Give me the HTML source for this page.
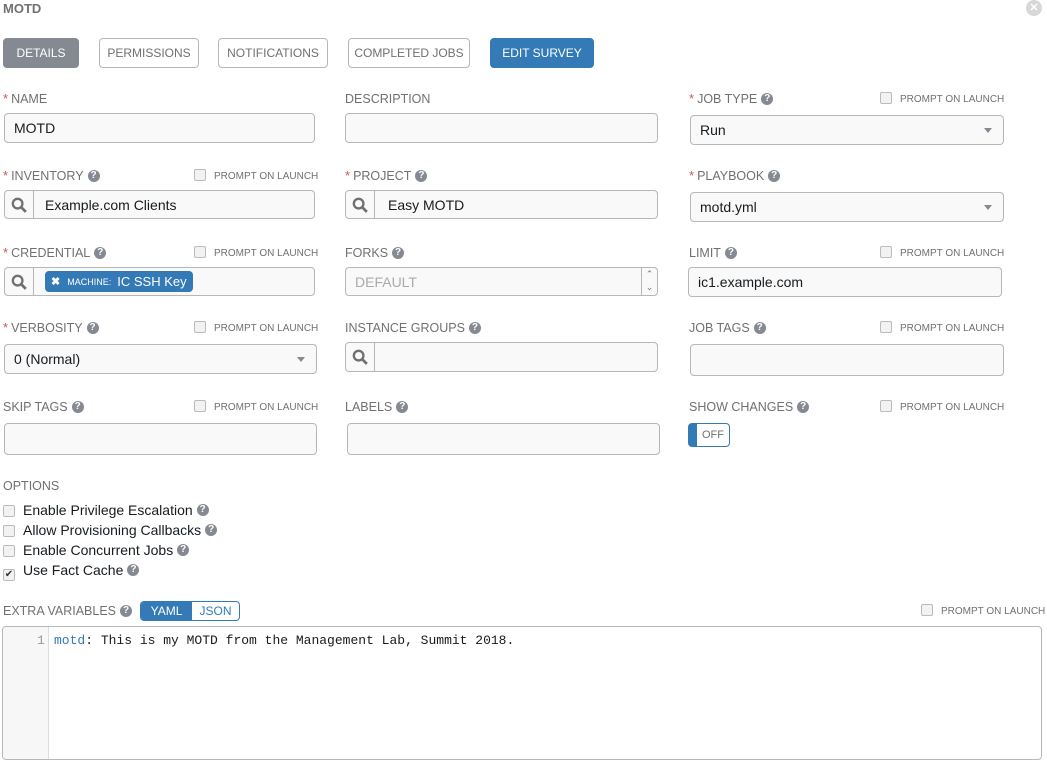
<!DOCTYPE html>
<html><head><meta charset="utf-8"><style>
*{box-sizing:border-box;margin:0;padding:0}
body{width:1047px;height:766px;background:#fff;font-family:"Liberation Sans",sans-serif;position:relative;overflow:hidden;color:#707070}
.a{position:absolute}
.lbl{position:absolute;font-size:12.5px;color:#707070;white-space:nowrap;line-height:14px}
.lbl .s{color:#d9534f;font-size:13px;margin-right:3px}
.q{display:inline-block;width:12px;height:12px;border-radius:50%;background:#848992;color:#fff;font-size:10px;font-weight:bold;text-align:center;line-height:12px;vertical-align:top;margin-top:1px;margin-left:4px}
.inp{position:absolute;border:1px solid #b7b7b7;border-radius:4px;background:#f9f9f9;font-size:14px;color:#161b1f;padding-left:9px;display:flex;align-items:center}
.sel::after{content:"";position:absolute;right:11px;top:50%;margin-top:-2px;border-left:4px solid transparent;border-right:4px solid transparent;border-top:5px solid #848992}
.pl{position:absolute;font-size:10px;color:#707070;white-space:nowrap;line-height:12px}
.cb{display:inline-block;width:12px;height:12px;border:1px solid #bbb;border-radius:2px;background:#f2f2f2;vertical-align:-2px;margin-right:8px}
.tab{position:absolute;top:38px;height:30px;border:1px solid #b7b7b7;border-radius:4px;font-size:12px;color:#707070;display:flex;align-items:center;justify-content:center;background:#fff}
.srch{position:absolute;left:0;top:0;bottom:0;width:29px;border-right:1px solid #b7b7b7;display:flex;align-items:center;justify-content:center}
.opt{position:absolute;left:3px;font-size:14px;color:#161b1f;white-space:nowrap;line-height:16px}
.opt .q{margin-top:2px}
</style></head><body>
<div class="a" style="left:3px;top:1px;font-size:13px;font-weight:bold;color:#707070">MOTD</div>
<div class="a" style="left:1026px;top:0;width:16px;height:16px;border-radius:50%;background:#d7d7d7;color:#fff;font-size:11px;font-weight:bold;text-align:center;line-height:16px">✕</div>

<div class="tab" style="left:3px;width:76px;background:#848992;border-color:#848992;color:#fff">DETAILS</div>
<div class="tab" style="left:99px;width:100px">PERMISSIONS</div>
<div class="tab" style="left:218px;width:110px">NOTIFICATIONS</div>
<div class="tab" style="left:348px;width:122px">COMPLETED JOBS</div>
<div class="tab" style="left:490px;width:104px;background:#337ab7;border-color:#337ab7;color:#fff">EDIT SURVEY</div>

<div class="lbl" style="left:3px;top:92px"><span class="s">*</span>NAME</div>
<div class="inp" style="left:4px;top:113px;width:311px;height:30px">MOTD</div>
<div class="lbl" style="left:345px;top:92px">DESCRIPTION</div>
<div class="inp" style="left:345px;top:113px;width:313px;height:30px"></div>
<div class="lbl" style="left:689px;top:92px"><span class="s">*</span>JOB TYPE<span class="q">?</span></div>
<div class="pl" style="left:880px;top:92px"><span class="cb"></span>PROMPT ON LAUNCH</div>
<div class="inp sel" style="left:690px;top:115px;width:314px;height:30px">Run</div>

<div class="lbl" style="left:3px;top:169px"><span class="s">*</span>INVENTORY<span class="q">?</span></div>
<div class="pl" style="left:194px;top:169px"><span class="cb"></span>PROMPT ON LAUNCH</div>
<div class="inp" style="left:4px;top:190px;width:311px;height:29px;padding-left:40px"><div class="srch"><svg width="16" height="16" viewBox="0 0 14 14"><circle cx="5.8" cy="5.8" r="4.2" fill="none" stroke="#707070" stroke-width="2"/><path d="M9 9l4 4" stroke="#707070" stroke-width="2.4"/></svg></div>Example.com Clients</div>
<div class="lbl" style="left:345px;top:169px"><span class="s">*</span>PROJECT<span class="q">?</span></div>
<div class="inp" style="left:345px;top:190px;width:313px;height:29px;padding-left:42px"><div class="srch"><svg width="16" height="16" viewBox="0 0 14 14"><circle cx="5.8" cy="5.8" r="4.2" fill="none" stroke="#707070" stroke-width="2"/><path d="M9 9l4 4" stroke="#707070" stroke-width="2.4"/></svg></div>Easy MOTD</div>
<div class="lbl" style="left:689px;top:169px"><span class="s">*</span>PLAYBOOK<span class="q">?</span></div>
<div class="inp sel" style="left:690px;top:192px;width:314px;height:30px">motd.yml</div>

<div class="lbl" style="left:3px;top:246px"><span class="s">*</span>CREDENTIAL<span class="q">?</span></div>
<div class="pl" style="left:194px;top:246px"><span class="cb"></span>PROMPT ON LAUNCH</div>
<div class="inp" style="left:4px;top:267px;width:311px;height:29px;padding-left:40px"><div class="srch"><svg width="16" height="16" viewBox="0 0 14 14"><circle cx="5.8" cy="5.8" r="4.2" fill="none" stroke="#707070" stroke-width="2"/><path d="M9 9l4 4" stroke="#707070" stroke-width="2.4"/></svg></div>
<div style="height:21px;width:148px;background:#337ab7;border-radius:4px;color:#fff;font-size:13px;display:flex;align-items:center;padding-left:6px"><b style="font-size:11px;margin-right:7px">✖</b><span style="font-size:9px;margin-right:6px">MACHINE:</span>IC SSH Key</div></div>
<div class="lbl" style="left:345px;top:246px">FORKS<span class="q">?</span></div>
<div class="inp" style="left:345px;top:267px;width:313px;height:29px;color:#aaa">DEFAULT<div class="a" style="right:0;top:0;bottom:0;width:16px;border-left:1px solid #b7b7b7;font-size:9px;color:#777;text-align:center;line-height:13px">⌃<br>⌄</div></div>
<div class="lbl" style="left:689px;top:246px">LIMIT<span class="q">?</span></div>
<div class="pl" style="left:880px;top:246px"><span class="cb"></span>PROMPT ON LAUNCH</div>
<div class="inp" style="left:688px;top:267px;width:314px;height:30px">ic1.example.com</div>

<div class="lbl" style="left:3px;top:321px"><span class="s">*</span>VERBOSITY<span class="q">?</span></div>
<div class="pl" style="left:194px;top:321px"><span class="cb"></span>PROMPT ON LAUNCH</div>
<div class="inp sel" style="left:4px;top:344px;width:313px;height:30px">0 (Normal)</div>
<div class="lbl" style="left:345px;top:321px">INSTANCE GROUPS<span class="q">?</span></div>
<div class="inp" style="left:345px;top:342px;width:313px;height:30px"><div class="srch"><svg width="16" height="16" viewBox="0 0 14 14"><circle cx="5.8" cy="5.8" r="4.2" fill="none" stroke="#707070" stroke-width="2"/><path d="M9 9l4 4" stroke="#707070" stroke-width="2.4"/></svg></div></div>
<div class="lbl" style="left:689px;top:321px">JOB TAGS<span class="q">?</span></div>
<div class="pl" style="left:880px;top:321px"><span class="cb"></span>PROMPT ON LAUNCH</div>
<div class="inp" style="left:690px;top:344px;width:314px;height:32px"></div>

<div class="lbl" style="left:3px;top:400px">SKIP TAGS<span class="q">?</span></div>
<div class="pl" style="left:194px;top:400px"><span class="cb"></span>PROMPT ON LAUNCH</div>
<div class="inp" style="left:4px;top:423px;width:313px;height:32px"></div>
<div class="lbl" style="left:345px;top:400px">LABELS<span class="q">?</span></div>
<div class="inp" style="left:347px;top:423px;width:313px;height:32px"></div>
<div class="lbl" style="left:689px;top:400px">SHOW CHANGES<span class="q">?</span></div>
<div class="pl" style="left:880px;top:400px"><span class="cb"></span>PROMPT ON LAUNCH</div>
<div class="a" style="left:688px;top:423px;width:42px;height:24px;border:1px solid #337ab7;border-left:9px solid #337ab7;border-radius:4px;font-size:11px;color:#707070;text-align:center;line-height:22px">OFF</div>

<div class="lbl" style="left:3px;top:479px">OPTIONS</div>
<div class="opt" style="top:502px"><span class="cb"></span>Enable Privilege Escalation<span class="q">?</span></div>
<div class="opt" style="top:522px"><span class="cb"></span>Allow Provisioning Callbacks<span class="q">?</span></div>
<div class="opt" style="top:542px"><span class="cb"></span>Enable Concurrent Jobs<span class="q">?</span></div>
<div class="opt" style="top:562px"><span class="cb" style="font-size:10px;line-height:10px;text-align:center;color:#333">✔</span>Use Fact Cache<span class="q">?</span></div>

<div class="lbl" style="left:3px;top:604px">EXTRA VARIABLES<span class="q">?</span></div>
<div class="a" style="left:140px;top:601px;width:100px;height:20px;border:1px solid #337ab7;border-radius:4px;display:flex;font-size:12px;overflow:hidden"><div style="width:51px;background:#337ab7;color:#fff;text-align:center;line-height:18px">YAML</div><div style="flex:1;color:#337ab7;text-align:center;line-height:18px">JSON</div></div>
<div class="pl" style="left:921px;top:604px"><span class="cb"></span>PROMPT ON LAUNCH</div>
<div class="a" style="left:2px;top:626px;width:1040px;height:134px;border:1px solid #b7b7b7;border-radius:4px;background:#fff;overflow:hidden">
<div class="a" style="left:0;top:0;bottom:0;width:46px;background:#f7f7f7;border-right:1px solid #ddd"></div>
<div class="a" style="left:34px;top:6px;font-family:'Liberation Mono',monospace;font-size:13px;color:#999">1</div>
<div class="a" style="left:51px;top:6px;font-family:'Liberation Mono',monospace;font-size:13px;color:#161b1f;white-space:nowrap"><span style="color:#337ab7">motd</span>: This is my MOTD from the Management Lab, Summit 2018.</div>
</div>
</body></html>
